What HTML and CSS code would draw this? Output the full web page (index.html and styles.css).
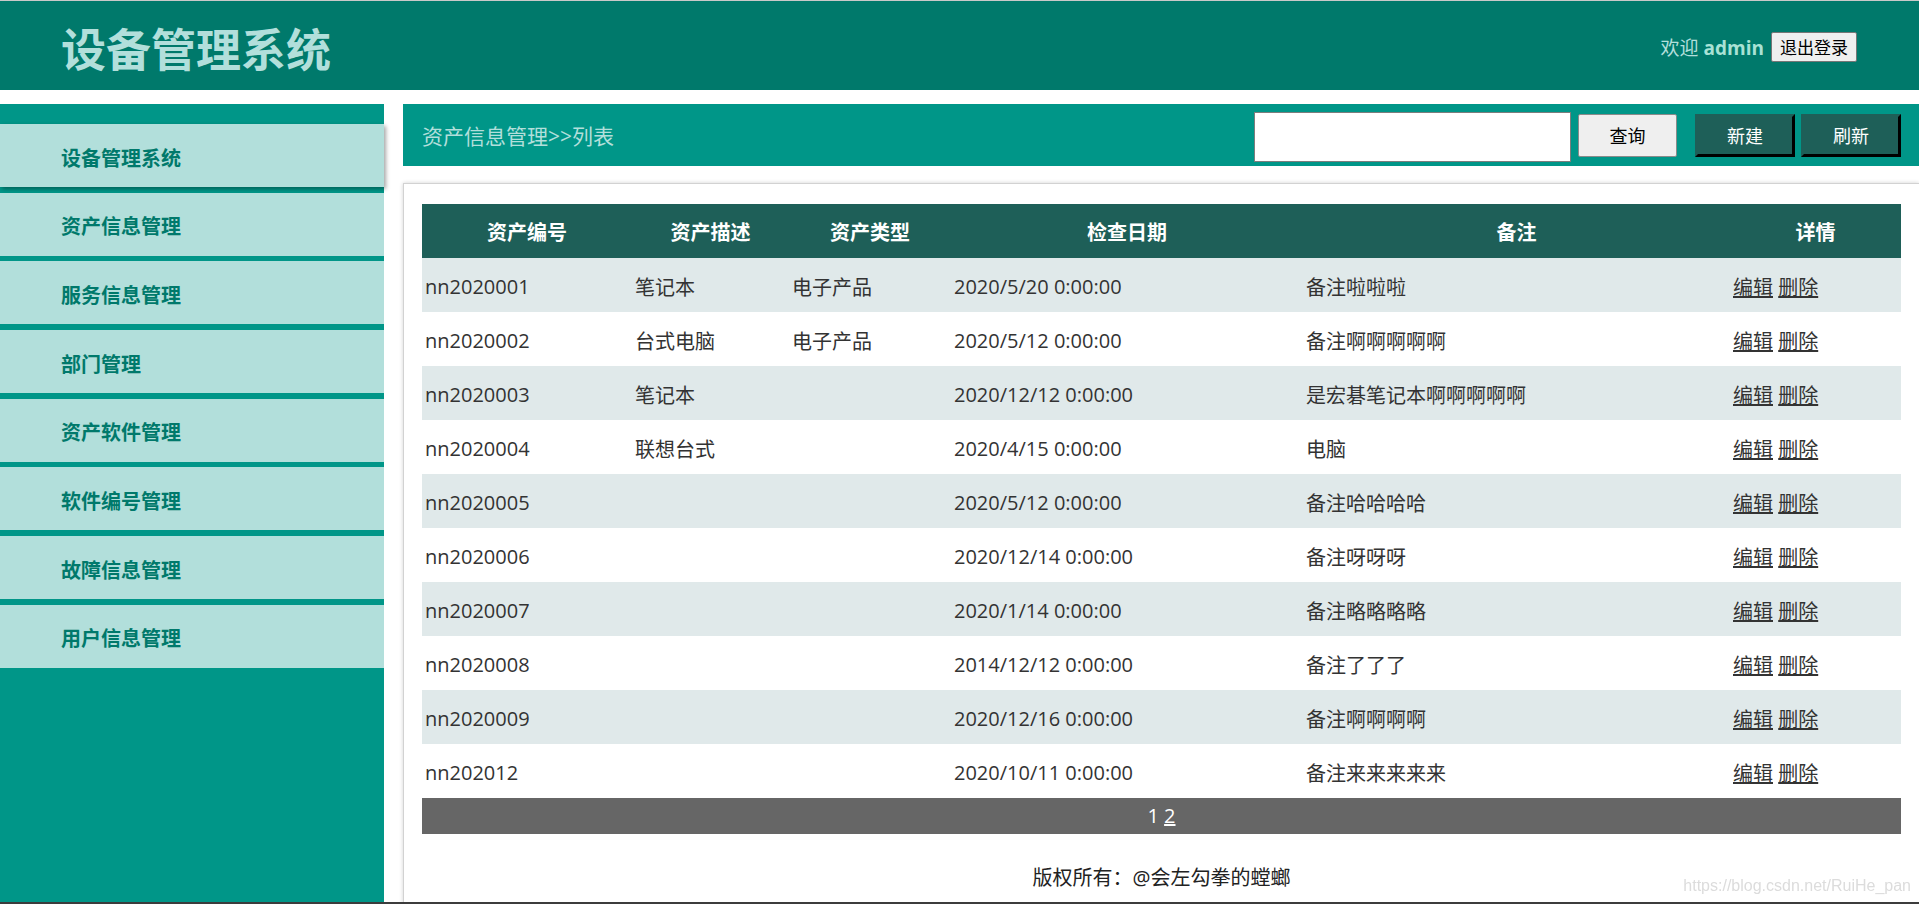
FILE: index.html
```html
<!DOCTYPE html>
<html lang="zh-CN">
<head>
<meta charset="utf-8">
<title>设备管理系统</title>
<link rel="stylesheet" href="styles.css">
</head>
<body>
<header class="topbar">
  <h1 class="brand">设备管理系统</h1>
  <div class="user">
    <span class="welcome">欢迎 <b class="uname">admin</b></span>
    <button class="btn-logout" type="button">退出登录</button>
  </div>
</header>
<div class="layout">
  <nav class="sidebar">
    <a class="nav-item active" href="#">设备管理系统</a>
    <a class="nav-item" href="#">资产信息管理</a>
    <a class="nav-item" href="#">服务信息管理</a>
    <a class="nav-item" href="#">部门管理</a>
    <a class="nav-item" href="#">资产软件管理</a>
    <a class="nav-item" href="#">软件编号管理</a>
    <a class="nav-item" href="#">故障信息管理</a>
    <a class="nav-item" href="#">用户信息管理</a>
  </nav>
  <main class="main">
    <div class="toolbar">
      <span class="crumb">资产信息管理&gt;&gt;列表</span>
      <div class="actions">
        <input class="search" type="text">
        <button class="btn-query" type="button">查询</button>
        <button class="btn-dark btn-new" type="button">新建</button>
        <button class="btn-dark" type="button">刷新</button>
      </div>
    </div>
    <section class="panel">
      <table class="grid">
        <colgroup>
          <col class="c1"><col class="c2"><col class="c3"><col class="c4"><col class="c5"><col class="c6">
        </colgroup>
        <thead>
          <tr><th>资产编号</th><th>资产描述</th><th>资产类型</th><th>检查日期</th><th>备注</th><th>详情</th></tr>
        </thead>
        <tbody>
          <tr><td>nn2020001</td><td>笔记本</td><td>电子产品</td><td>2020/5/20 0:00:00</td><td>备注啦啦啦</td><td><a href="#">编辑</a> <a href="#">删除</a></td></tr>
          <tr><td>nn2020002</td><td>台式电脑</td><td>电子产品</td><td>2020/5/12 0:00:00</td><td>备注啊啊啊啊啊</td><td><a href="#">编辑</a> <a href="#">删除</a></td></tr>
          <tr><td>nn2020003</td><td>笔记本</td><td></td><td>2020/12/12 0:00:00</td><td>是宏碁笔记本啊啊啊啊啊</td><td><a href="#">编辑</a> <a href="#">删除</a></td></tr>
          <tr><td>nn2020004</td><td>联想台式</td><td></td><td>2020/4/15 0:00:00</td><td>电脑</td><td><a href="#">编辑</a> <a href="#">删除</a></td></tr>
          <tr><td>nn2020005</td><td></td><td></td><td>2020/5/12 0:00:00</td><td>备注哈哈哈哈</td><td><a href="#">编辑</a> <a href="#">删除</a></td></tr>
          <tr><td>nn2020006</td><td></td><td></td><td>2020/12/14 0:00:00</td><td>备注呀呀呀</td><td><a href="#">编辑</a> <a href="#">删除</a></td></tr>
          <tr><td>nn2020007</td><td></td><td></td><td>2020/1/14 0:00:00</td><td>备注略略略略</td><td><a href="#">编辑</a> <a href="#">删除</a></td></tr>
          <tr><td>nn2020008</td><td></td><td></td><td>2014/12/12 0:00:00</td><td>备注了了了</td><td><a href="#">编辑</a> <a href="#">删除</a></td></tr>
          <tr><td>nn2020009</td><td></td><td></td><td>2020/12/16 0:00:00</td><td>备注啊啊啊啊</td><td><a href="#">编辑</a> <a href="#">删除</a></td></tr>
          <tr><td>nn202012</td><td></td><td></td><td>2020/10/11 0:00:00</td><td>备注来来来来来</td><td><a href="#">编辑</a> <a href="#">删除</a></td></tr>
        </tbody>
      </table>
      <div class="pager"><span>1</span> <a href="#">2</a></div>
      <footer class="copyright">版权所有：@会左勾拳的螳螂</footer>
    </section>
  </main>
</div>
<div class="watermark">https://blog.csdn.net/RuiHe_pan</div>
<div class="screen-edge"></div>
</body>
</html>
```

FILE: styles.css
```css
* { box-sizing: border-box; }

body {
  margin: 0;
  font-family: "Open Sans", "Noto Sans CJK SC", sans-serif;
  background: #fff;
  color: #333;
  overflow: hidden;
}

.topbar {
  height: 90px;
  border-top: 1px solid #c9c9c9;
  background: #00796b;
  display: flex;
  align-items: center;
  justify-content: space-between;
  padding: 0 62px 0 61px;
}

.brand {
  margin: 4px 0 0;
  font-family: "Noto Sans CJK SC", sans-serif;
  font-size: 45px;
  font-weight: 700;
  line-height: 1;
  color: #b2dfdb;
}

.user {
  display: flex;
  align-items: center;
  gap: 7px;
  margin-top: 2px;
}

.welcome {
  font-size: 19px;
  color: #b2dfdb;
}

.uname {
  color: #a8e2d5;
  font-weight: 700;
}

.btn-logout {
  height: 30px;
  width: 86px;
  padding: 0;
  font-family: "Noto Sans CJK SC", sans-serif;
  font-size: 17px;
  color: #000;
  background: #efefef;
  border: 1px solid #767676;
  border-radius: 2px;
}

.layout {
  display: flex;
  gap: 19px;
  margin-top: 14px;
  min-height: calc(100vh - 104px);
}

.sidebar {
  width: 384px;
  flex: none;
  background: #009688;
  padding-top: 20px;
  display: flex;
  flex-direction: column;
  gap: 5.7px;
}

.nav-item {
  height: 63px;
  display: flex;
  align-items: center;
  padding: 3px 0 0 61px;
  background: #b2dfdb;
  color: #00796b;
  font-family: "Noto Sans CJK SC", sans-serif;
  font-size: 20px;
  font-weight: 700;
  text-decoration: none;
}

.nav-item.active {
  box-shadow: 2px 2px 4px rgba(0, 0, 0, 0.35);
}

.main {
  flex: 1;
  min-width: 0;
}

.toolbar {
  height: 62px;
  background: #009688;
  display: flex;
  align-items: center;
  justify-content: space-between;
  padding: 0 18px 0 19px;
}

.crumb {
  font-size: 21px;
  color: #b2dfdb;
}

.actions {
  display: flex;
  align-items: center;
}

.search {
  width: 317px;
  height: 50px;
  margin: 4px 7px 0 0;
  border: 1px solid #7d7d7d;
  background: #fff;
}

.btn-query {
  width: 99px;
  height: 43px;
  margin-right: 18px;
  font-family: "Noto Sans CJK SC", sans-serif;
  font-size: 18px;
  color: #000;
  background: #efefef;
  border: 1px solid #8a8a8a;
  border-radius: 2px;
}

.btn-dark {
  width: 100px;
  height: 43px;
  padding: 0;
  font-family: "Noto Sans CJK SC", sans-serif;
  font-size: 18px;
  color: #fff;
  background: #1e5f58;
  border: 3px solid;
  border-color: #1e5f58 #000 #000 #1e5f58;
}

.btn-new {
  margin-right: 6px;
}

.panel {
  margin-top: 17px;
  border-top: 1px solid #d2d2d2;
  border-left: 1px solid #d2d2d2;
  box-shadow: 0 0 4px rgba(0, 0, 0, 0.18);
  padding: 20px 18px 20px 18px;
}

.grid {
  width: 100%;
  table-layout: fixed;
  border-collapse: collapse;
}

.c1 { width: 210px; }
.c2 { width: 157px; }
.c3 { width: 162px; }
.c4 { width: 352px; }
.c5 { width: 427px; }
.c6 { width: 171px; }

.grid th {
  height: 54px;
  padding: 0;
  background: #1e5f58;
  color: #fff;
  font-family: "Noto Sans CJK SC", sans-serif;
  font-size: 20px;
  font-weight: 700;
  text-align: center;
}

.grid td {
  height: 54px;
  padding: 2px 0 0 3px;
  font-size: 20px;
  color: #333;
  white-space: nowrap;
}

.grid tbody tr:nth-child(odd) td {
  background: #e0e9ea;
}

.grid td a {
  color: #333;
  text-decoration: underline;
}

.pager {
  height: 36px;
  line-height: 36px;
  background: #666;
  color: #fff;
  font-size: 20px;
  text-align: center;
}

.pager a {
  color: #fff;
}

.copyright {
  margin-top: 30px;
  font-size: 20px;
  line-height: 28px;
  color: #222;
  text-align: center;
}

.watermark {
  position: fixed;
  right: 8px;
  bottom: 9px;
  font-family: "Liberation Sans", sans-serif;
  font-size: 16px;
  color: #dcdcdc;
}

.screen-edge {
  position: fixed;
  left: 0;
  right: 0;
  bottom: 0;
  height: 2px;
  background: #3c3c3c;
}
```
